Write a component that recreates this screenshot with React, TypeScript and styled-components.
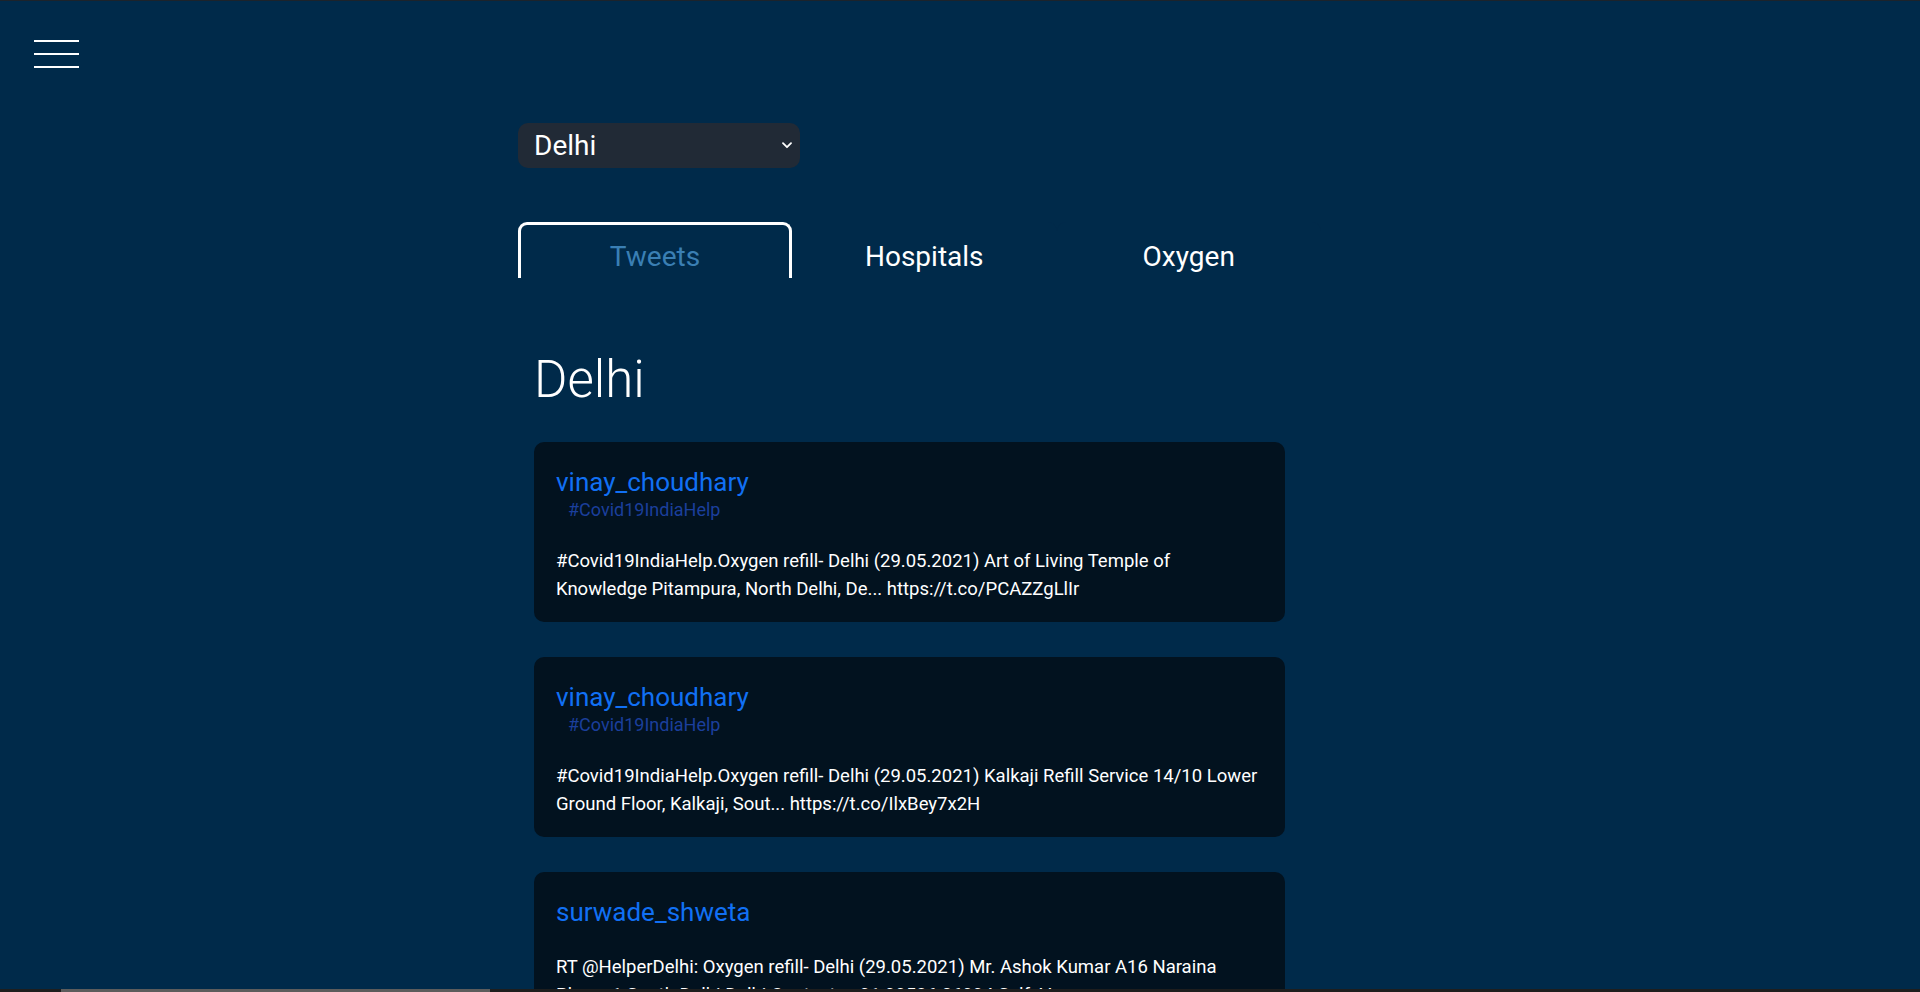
import React, { useState } from "react";
import styled, { createGlobalStyle } from "styled-components";

const GlobalStyle = createGlobalStyle`
  * {
    box-sizing: border-box;
  }

  html, body {
    margin: 0;
    padding: 0;
    background-color: #002a4a;
    font-family: Roboto, "Liberation Sans", Arial, sans-serif;
    color: #fff;
  }
`;

interface Tweet {
  user: string;
  tag?: string;
  text: string;
}

const tweets: Tweet[] = [
  {
    user: "vinay_choudhary",
    tag: "#Covid19IndiaHelp",
    text: "#Covid19IndiaHelp.Oxygen refill- Delhi (29.05.2021) Art of Living Temple of Knowledge Pitampura, North Delhi, De... https://t.co/PCAZZgLlIr",
  },
  {
    user: "vinay_choudhary",
    tag: "#Covid19IndiaHelp",
    text: "#Covid19IndiaHelp.Oxygen refill- Delhi (29.05.2021) Kalkaji Refill Service 14/10 Lower Ground Floor, Kalkaji, Sout... https://t.co/IlxBey7x2H",
  },
  {
    user: "surwade_shweta",
    text: "RT @HelperDelhi: Oxygen refill- Delhi (29.05.2021) Mr. Ashok Kumar A16 Naraina Phase 1 South Delhi Delhi Contact : +91 99536 06994 Self. V... https://t.co/Hd7vQm2x1P",
  },
  {
    user: "HelperDelhi",
    tag: "#Covid19IndiaHelp",
    text: "Oxygen refill- Delhi (29.05.2021) Sector 5 Dwarka, New Delhi. Contact the number given for availability... https://t.co/Qa81Lkx0Tz",
  },
];

const tabs = ["Tweets", "Hospitals", "Oxygen"];
const cities = ["Delhi", "Mumbai", "Bangalore", "Pune", "Chennai"];

export default function App() {
  const [city, setCity] = useState("Delhi");
  const [active, setActive] = useState(0);

  return (
    <>
      <GlobalStyle />
      <Page>
        <Header>
          <MenuButton aria-label="menu">
            <span />
            <span />
            <span />
          </MenuButton>
        </Header>

        <Main>
          <SelectWrap>
            <CitySelect value={city} onChange={(e) => setCity(e.target.value)}>
              {cities.map((c) => (
                <option key={c} value={c}>
                  {c}
                </option>
              ))}
            </CitySelect>
            <Chevron width="10" height="7" viewBox="0 0 10 7">
              <path d="M1 1.2 L5 5.2 L9 1.2" fill="none" stroke="#fff" strokeWidth="1.8" strokeLinecap="round" strokeLinejoin="round" />
            </Chevron>
          </SelectWrap>

          <TabList>
            {tabs.map((t, i) => (
              <Tab key={t} $active={i === active} onClick={() => setActive(i)}>
                {t}
              </Tab>
            ))}
          </TabList>

          <Panel>
            <Heading>{city}</Heading>
            {tweets.map((tw, i) => (
              <Card key={i}>
                <User>{tw.user}</User>
                {tw.tag && <Tag>{tw.tag}</Tag>}
                <Body>{tw.text}</Body>
              </Card>
            ))}
          </Panel>
        </Main>

        <ScrollTrack>
          <ScrollThumb />
        </ScrollTrack>
      </Page>
    </>
  );
}

const Page = styled.div`
  height: 100vh;
  overflow-y: auto;
  scrollbar-width: none;
  border-top: 1px solid #1c232b;
  background-color: #002a4a;

  &::-webkit-scrollbar {
    display: none;
  }
`;

const Header = styled.header`
  padding: 39px 34px 0;
`;

const MenuButton = styled.button`
  display: flex;
  flex-direction: column;
  gap: 11px;
  width: 45px;
  padding: 0;
  border: none;
  background: none;
  cursor: pointer;

  span {
    display: block;
    height: 2px;
    width: 100%;
    background-color: #fff;
  }
`;

const Main = styled.main`
  margin-left: 518px;
  width: 803px;
  padding-bottom: 40px;
`;

const SelectWrap = styled.div`
  position: relative;
  width: 282px;
  margin-top: 55px;
`;

const CitySelect = styled.select`
  appearance: none;
  width: 100%;
  height: 45px;
  padding: 0 30px 0 16px;
  border: none;
  border-radius: 10px;
  background-color: #212a36;
  color: #fff;
  font-family: Roboto, "Liberation Sans", Arial, sans-serif;
  font-size: 28px;
  outline: none;
  cursor: pointer;
`;

const Chevron = styled.svg`
  position: absolute;
  right: 8px;
  top: 19px;
  pointer-events: none;
`;

const TabList = styled.div`
  display: flex;
  margin-top: 54px;
  border-bottom: 2px solid #fff;
`;

const Tab = styled.button<{ $active: boolean }>`
  flex: ${(p) => (p.$active ? "0 0 274px" : "1")};
  height: 56px;
  margin-bottom: -2px;
  padding: 11px 0 0;
  border: 3px solid ${(p) => (p.$active ? "#fff" : "transparent")};
  border-bottom: none;
  border-radius: 9px 9px 0 0;
  background-color: #002a4a;
  color: ${(p) => (p.$active ? "#3a7fb4" : "#fff")};
  font-family: Roboto, "Liberation Sans", Arial, sans-serif;
  font-size: 28px;
  line-height: 32px;
  cursor: pointer;
`;

const Panel = styled.section`
  padding: 74px 36px 0 16px;
`;

const Heading = styled.h1`
  margin: 0 0 34px;
  font-size: 51px;
  font-weight: 300;
  line-height: 56px;
`;

const Card = styled.article`
  margin-bottom: 35px;
  padding: 24px 23px 19px 22px;
  border-radius: 10px;
  background-color: #02121f;
`;

const User = styled.div`
  font-size: 26px;
  line-height: 32px;
  color: #1170f4;
`;

const Tag = styled.div`
  padding-left: 12px;
  font-size: 18px;
  line-height: 24px;
  color: #1b3f9c;
`;

const Body = styled.p`
  margin: 25px 0 0;
  font-size: 18.5px;
  line-height: 28px;
  color: #fff;
`;

const ScrollTrack = styled.div`
  position: fixed;
  left: 0;
  right: 0;
  bottom: 0;
  height: 3px;
  background-color: #1e1e1e;
`;

const ScrollThumb = styled.div`
  width: 429px;
  height: 100%;
  margin-left: 61px;
  background-color: #5c5c5c;
`;
